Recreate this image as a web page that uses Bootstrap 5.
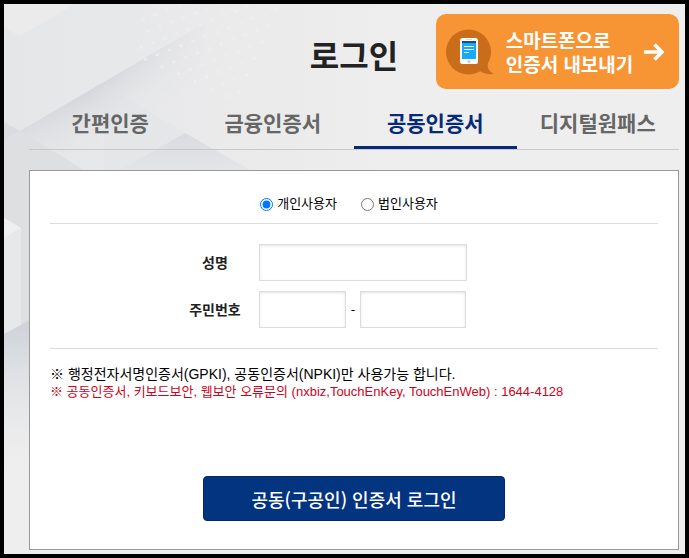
<!DOCTYPE html>
<html lang="ko">
<head>
<meta charset="utf-8">
<meta name="viewport" content="width=device-width, initial-scale=1">
<title>로그인</title>
<link href="https://cdn.jsdelivr.net/npm/bootstrap@5.3.0/dist/css/bootstrap.min.css" rel="stylesheet">
<style>
body{font-family:"Noto Sans CJK KR","Noto Sans CJK SC",sans-serif;font-size:13px;color:#000;background:#eee}
.frame{border:4px solid #000;background:linear-gradient(180deg,#eee0 55%,#eee 85%),linear-gradient(90deg,#e5e6e8,#ebebec 40%,#eee 60%);padding:10px 6px 4px 25px}
.facets{left:0;top:0;z-index:-1}
.head-grid{display:grid;grid-template-columns:1fr auto 1fr;min-height:75px}
.page-title{grid-column:2;font-size:32px;line-height:40px;font-weight:700;color:#222;padding-top:20px}
.export-btn{width:243px;height:75px;background:#f79433;border-radius:10px;color:#fff;font-size:19px;line-height:24px;font-weight:700;padding:0 15px 0 10px}
.export-btn:hover{color:#fff}
.export-text{font-family:"Liberation Sans","Noto Sans CJK KR",sans-serif;padding-top:4px}
.login-tabs{border-bottom:1px solid #c8c9cb;margin-top:12px}
.login-tabs .nav-link{height:48px;padding:7px 0;font-size:21px;line-height:28px;font-weight:700;color:#666;border-radius:0}
.login-tabs .nav-link.active{color:#072a78;border-bottom:3px solid #072a78}
.panel{background:#fff;border:1px solid #999;margin-top:20px;padding:0 20px 28px}
.user-type{height:53px;padding:12px 10px 0 0;gap:24px;border-bottom:1px solid #ddd}
.user-type input{width:13px;height:13px;margin:3px 0 0;accent-color:#0075ff}
.user-type label{line-height:16px}
.fields{padding:20px 0 20px 121px;gap:10px;border-bottom:1px solid #ddd}
.field-label{width:88px;font-size:14px;font-weight:700;color:#222;text-align:center}
.field-box{height:37px;border:1px solid #ddd;border-radius:0;box-shadow:inset 0 1px 3px #e4e4e4}
.name-box{width:208px}
.front-box{width:87px}
.back-box{width:106px}
.dash{width:14px;text-align:center}
.notes{font-family:"Liberation Sans","Noto Sans CJK KR",sans-serif;line-height:17px;padding-top:17px;margin-bottom:76px}
.note-black{font-size:14px}
.note-red{color:#d0021b}
.login-btn{width:302px;height:45px;background:#03347f;border:1px solid #022a69;border-radius:4px;color:#fff;font-size:18px;line-height:24px;font-weight:500}
.login-btn:hover{background:#022a69;color:#fff}
</style>
<script src="https://cdn.jsdelivr.net/npm/bootstrap@5.3.0/dist/js/bootstrap.bundle.min.js"></script>
</head>
<body>
<main class="frame position-relative z-0 min-vh-100">
  <svg class="facets position-absolute" width="420" height="500" viewBox="4 4 420 500" aria-hidden="true">
    <defs>
      <linearGradient id="ridge" gradientUnits="userSpaceOnUse" x1="105" y1="81" x2="130" y2="125"><stop offset="0" stop-color="#cfd1d7" stop-opacity=".8"/><stop offset="1" stop-color="#e6e7e9" stop-opacity="0"/></linearGradient>
      <linearGradient id="fade" x1="0" y1="0" x2="1" y2="0"><stop offset="0" stop-color="#888"/><stop offset=".4" stop-color="#fff"/><stop offset=".9" stop-color="#000"/></linearGradient>
      <mask id="side"><rect x="0" y="0" width="230" height="180" fill="url(#fade)"/></mask>
      <linearGradient id="low" x1="0" y1="0" x2="0" y2="1"><stop offset="0" stop-color="#d9dbdf"/><stop offset="1" stop-color="#e0e1e4" stop-opacity=".6"/></linearGradient>
      <linearGradient id="floor" x1="0" y1="0" x2="0" y2="1"><stop offset="0" stop-color="#cdd2d7"/><stop offset="1" stop-color="#eee" stop-opacity="0"/></linearGradient>
      <pattern id="dots" width="18" height="18" patternUnits="userSpaceOnUse" patternTransform="rotate(24)"><circle cx="4" cy="4" r="1.6" fill="#efeff0"/><circle cx="13" cy="13" r="1.4" fill="#eeeeef"/></pattern>
    </defs>
    <path d="M4 4H75L20 36L4 27Z" fill="#ebebec"/>
    <path d="M20 131L210 20V133L185 133L120 170H20Z" fill="url(#ridge)" mask="url(#side)"/>
    <path d="M4 122L20 131L4 140Z" fill="#dadce0"/>
    <path d="M4 140L20 131L84 170H4Z" fill="#dddfe1"/>
    <path d="M104 84L185 133L120 170H104Z" fill="#dfe1e4" opacity=".3"/>
    <path d="M185 133L250 170H120Z" fill="url(#low)"/>
    <path d="M140 4H290L240 105L140 65Z" fill="url(#dots)"/>
    <path d="M4 170H30V330H4Z" fill="#dddfe1"/>
    <path d="M4 218L21 228V326L4 334Z" fill="#e7e8ea"/>
    <path d="M4 218L21 228L4 238Z" fill="#eeeff0"/>
    <path d="M4 334L30 320V470H4Z" fill="url(#floor)"/>
  </svg>

  <header class="head-grid">
    <h1 class="page-title mb-0">로그인</h1>
    <a href="#" class="export-btn d-flex align-items-center justify-content-between text-decoration-none ms-auto">
      <svg class="flex-shrink-0" width="49" height="46" viewBox="0 0 49 46" aria-hidden="true">
        <circle cx="22.500" cy="23" r="22.500" fill="#c96d1b"/>
        <path d="M42 33Q40 42 48 44.500Q41 47 34 42Z" fill="#c96d1b"/>
        <rect x="14" y="9" width="18" height="26" rx="2.500" fill="#fff"/>
        <rect x="16" y="12" width="14" height="18" fill="#14aaff"/>
        <rect x="16" y="12" width="14" height="2" fill="#264a70"/>
        <path d="M20 10.500H26" stroke="#ddd"/>
        <path d="M18 17.500H28M18 20.500H28M18 23.500H23" stroke="#fff"/>
        <circle cx="23" cy="32.500" r="1.500" fill="#ccc"/>
      </svg>
      <span class="export-text">스마트폰으로<br>인증서 내보내기</span>
      <svg class="flex-shrink-0" width="20" height="18" viewBox="0 0 20 18" fill="none" stroke="#fff" stroke-width="3.500" aria-hidden="true"><path d="M0 9H18M10.500 1.500L18 9L10.500 16.500"/></svg>
    </a>
  </header>

  <nav class="login-tabs nav nav-justified flex-nowrap">
    <a class="nav-link w-25" href="#">간편인증</a>
    <a class="nav-link w-25" href="#">금융인증서</a>
    <a class="nav-link w-25 active" href="#" aria-current="page">공동인증서</a>
    <a class="nav-link w-25" href="#">디지털원패스</a>
  </nav>

  <form class="panel">
    <div class="user-type d-flex align-items-center justify-content-center">
      <div class="d-flex gap-1"><input type="radio" name="user" id="person" checked><label for="person">개인사용자</label></div>
      <div class="d-flex gap-1"><input type="radio" name="user" id="corp"><label for="corp">법인사용자</label></div>
    </div>
    <div class="fields d-flex flex-column">
      <div class="d-flex align-items-center">
        <label class="field-label" for="name">성명</label>
        <input class="form-control field-box name-box" type="text" id="name">
      </div>
      <div class="d-flex align-items-center">
        <label class="field-label" for="front">주민번호</label>
        <input class="form-control field-box front-box" type="text" id="front">
        <span class="dash">-</span>
        <input class="form-control field-box back-box" type="password" id="back" aria-label="주민번호 뒷자리">
      </div>
    </div>
    <div class="notes">
      <div class="note-black">※ 행정전자서명인증서(GPKI), 공동인증서(NPKI)만 사용가능 합니다.</div>
      <div class="note-red">※ 공동인증서, 키보드보안, 웹보안 오류문의 (nxbiz,TouchEnKey, TouchEnWeb) : 1644-4128</div>
    </div>
    <div class="text-center">
      <button type="submit" class="btn login-btn">공동(구공인) 인증서 로그인</button>
    </div>
  </form>
</main>
</body>
</html>
